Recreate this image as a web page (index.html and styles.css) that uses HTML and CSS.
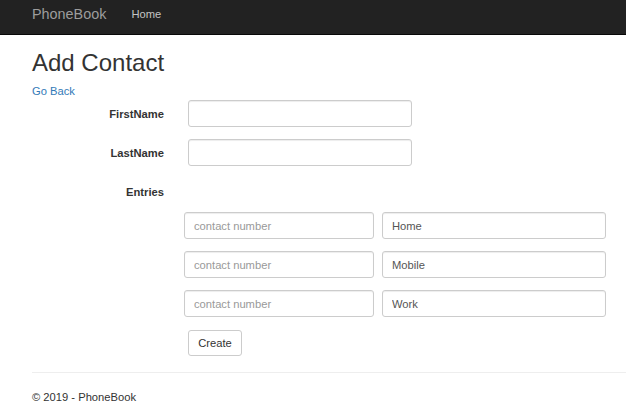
FILE: index.html
```html
<!DOCTYPE html>
<html>
<head>
<meta charset="utf-8">
<title>Add Contact - PhoneBook</title>
<link rel="stylesheet" href="styles.css">
</head>
<body>
<nav class="navbar">
  <a class="brand" href="#">PhoneBook</a>
  <a class="nav-link" href="#">Home</a>
</nav>
<main class="container">
  <h2 class="title">Add Contact</h2>
  <a class="back" href="#">Go Back</a>
  <form class="form">
    <div class="row">
      <label class="label">FirstName</label>
      <input class="input wide" type="text">
    </div>
    <div class="row">
      <label class="label">LastName</label>
      <input class="input wide" type="text">
    </div>
    <div class="row">
      <label class="label">Entries</label>
    </div>
    <div class="entries">
      <div class="entry">
        <input class="input num" type="text" placeholder="contact number">
        <input class="input wide" type="text" value="Home">
      </div>
      <div class="entry">
        <input class="input num" type="text" placeholder="contact number">
        <input class="input wide" type="text" value="Mobile">
      </div>
      <div class="entry">
        <input class="input num" type="text" placeholder="contact number">
        <input class="input wide" type="text" value="Work">
      </div>
    </div>
    <div class="actions">
      <button class="btn" type="button">Create</button>
    </div>
  </form>
  <hr class="rule">
  <footer class="footer">© 2019 - PhoneBook</footer>
</main>
</body>
</html>
```
FILE: styles.css
```css
* { box-sizing: border-box; }
html, body { margin: 0; padding: 0; }
body {
  font-family: "Liberation Sans", Arial, sans-serif;
  font-size: 11.2px;
  line-height: 16px;
  color: #333;
  background: #fff;
  overflow: hidden;
}
.navbar {
  height: 35px;
  background: #222;
  border-bottom: 1px solid #080808;
  display: flex;
  align-items: center;
  padding: 0 0 6px 32px;
}
.brand {
  color: #9d9d9d;
  font-size: 14.4px;
  text-decoration: none;
  line-height: 20px;
  margin-right: 25px;
}
.nav-link {
  color: #c4c4c4;
  text-decoration: none;
  font-size: 11.2px;
}
.container {
  padding-left: 32px;
}
.title {
  font-size: 24px;
  font-weight: 500;
  line-height: 26px;
  margin: 15px 0 7px;
}
.back {
  display: block;
  color: #337ab7;
  text-decoration: none;
  line-height: 16px;
  width: max-content;
}
.form {
  margin-top: 1px;
  display: flex;
  flex-direction: column;
}
.row {
  display: flex;
  align-items: center;
  height: 27px;
  margin-bottom: 12px;
}
.row:nth-child(3) { margin-bottom: 7px; }
.label {
  width: 132px;
  text-align: right;
  font-weight: bold;
  margin-right: 24px;
}
.input {
  height: 27px;
  border: 1px solid #ccc;
  border-radius: 3px;
  padding: 0 9px;
  font-family: inherit;
  font-size: 11.2px;
  color: #555;
  background: #fff;
  box-shadow: inset 0 1px 1px rgba(0,0,0,0.075);
  outline: none;
}
.input::placeholder { color: #999; }
.wide { width: 224px; }
.num { width: 190px; }
.entries {
  display: flex;
  flex-direction: column;
  gap: 12px;
  padding-left: 152px;
}
.entry {
  display: flex;
  gap: 8px;
}
.actions {
  padding-left: 156px;
  margin-top: 13px;
}
.btn {
  height: 26px;
  width: 54px;
  border: 1px solid #ccc;
  border-radius: 3px;
  background: #fff;
  color: #333;
  font-family: inherit;
  font-size: 11.2px;
  padding: 0;
}
.rule {
  border: 0;
  border-top: 1px solid #eee;
  margin: 16px 0 16px;
}
.footer {
  line-height: 16px;
}
```
